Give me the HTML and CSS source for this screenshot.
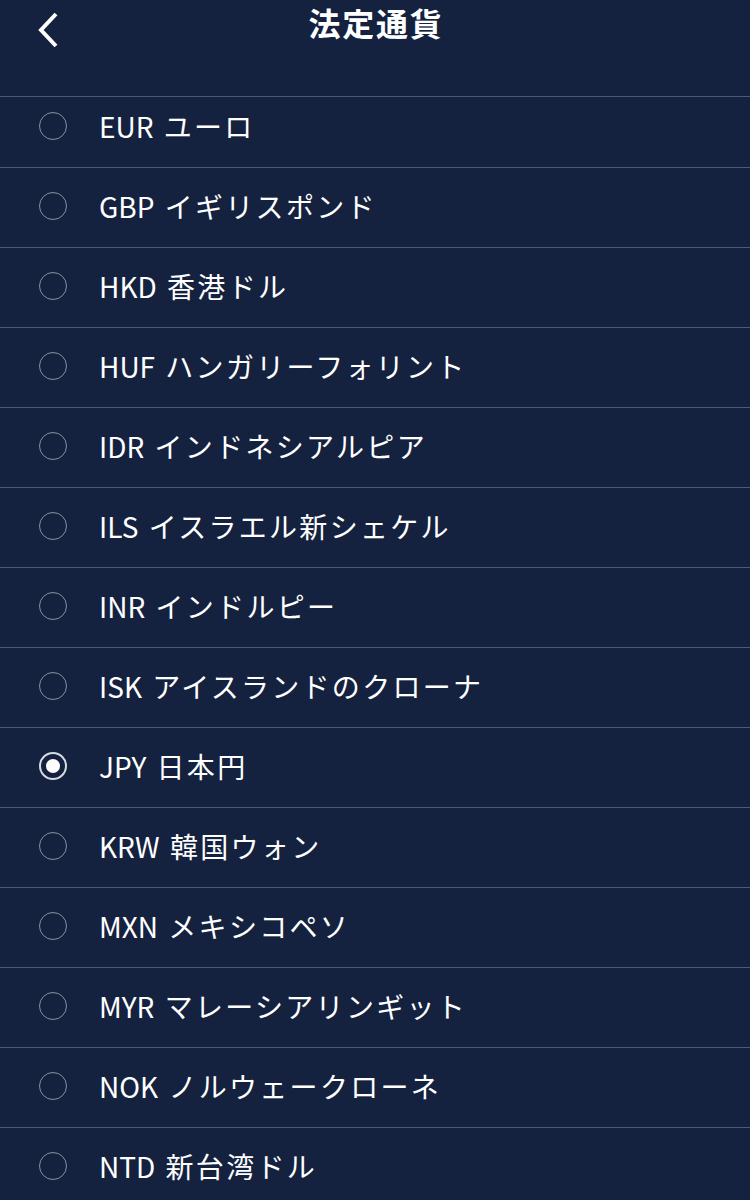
FILE: index.html
```html
<!DOCTYPE html>
<html lang="ja">
<head>
<meta charset="utf-8">
<link rel="stylesheet" href="styles.css">
</head>
<body>
<div class="screen">
  <header class="header">
    <div class="back">
      <svg width="24" height="36" viewBox="0 0 24 36"><path d="M20 2 L5 18 L20 34" fill="none" stroke="#fff" stroke-width="4" stroke-linecap="butt" stroke-linejoin="miter"/></svg>
    </div>
    <h1 class="title">法定通貨</h1>
  </header>
  <div class="viewport">
    <ul class="list">
      <li class="row"><span class="radio"></span><span class="label"><span class="code">EUR</span> <span class="name">ユーロ</span></span></li>
      <li class="row"><span class="radio"></span><span class="label"><span class="code">GBP</span> <span class="name">イギリスポンド</span></span></li>
      <li class="row"><span class="radio"></span><span class="label"><span class="code">HKD</span> <span class="name">香港ドル</span></span></li>
      <li class="row"><span class="radio"></span><span class="label"><span class="code">HUF</span> <span class="name">ハンガリーフォリント</span></span></li>
      <li class="row"><span class="radio"></span><span class="label"><span class="code">IDR</span> <span class="name">インドネシアルピア</span></span></li>
      <li class="row"><span class="radio"></span><span class="label"><span class="code">ILS</span> <span class="name">イスラエル新シェケル</span></span></li>
      <li class="row"><span class="radio"></span><span class="label"><span class="code">INR</span> <span class="name">インドルピー</span></span></li>
      <li class="row"><span class="radio"></span><span class="label"><span class="code">ISK</span> <span class="name">アイスランドのクローナ</span></span></li>
      <li class="row"><span class="radio checked"></span><span class="label"><span class="code">JPY</span> <span class="name">日本円</span></span></li>
      <li class="row"><span class="radio"></span><span class="label"><span class="code">KRW</span> <span class="name">韓国ウォン</span></span></li>
      <li class="row"><span class="radio"></span><span class="label"><span class="code">MXN</span> <span class="name">メキシコペソ</span></span></li>
      <li class="row"><span class="radio"></span><span class="label"><span class="code">MYR</span> <span class="name">マレーシアリンギット</span></span></li>
      <li class="row"><span class="radio"></span><span class="label"><span class="code">NOK</span> <span class="name">ノルウェークローネ</span></span></li>
      <li class="row"><span class="radio"></span><span class="label"><span class="code">NTD</span> <span class="name">新台湾ドル</span></span></li>
    </ul>
  </div>
</div>
</body>
</html>
```
FILE: styles.css
```css
* { box-sizing: border-box; }
html, body {
  margin: 0;
  padding: 0;
  background: #14223f;
}
body {
  font-family: "Noto Sans CJK JP", "Noto Sans", sans-serif;
  color: #fff;
}
.screen {
  width: 750px;
  height: 1200px;
  overflow: hidden;
  background: #14223f;
  display: flex;
  flex-direction: column;
}
.header {
  position: relative;
  height: 97px;
  flex: none;
  border-bottom: 1.5px solid #4e5872;
  display: flex;
  justify-content: center;
}
.back {
  position: absolute;
  left: 36px;
  top: 12px;
  width: 24px;
  height: 36px;
}
.back svg { display: block; }
.title {
  margin: 0;
  font-size: 32px;
  font-weight: 700;
  line-height: 44px;
  letter-spacing: 1.8px;
  padding-left: 2px;
}
.viewport {
  flex: 1;
  overflow: hidden;
}
.list {
  list-style: none;
  margin: -9px 0 0;
  padding: 0;
}
.row {
  height: 80px;
  border-bottom: 1.5px solid #4e5872;
  display: flex;
  align-items: center;
  padding-left: 39px;
  padding-bottom: 3px;
}
.radio {
  width: 28px;
  height: 28px;
  border-radius: 50%;
  border: 1.5px solid #8a909e;
  flex: none;
  display: flex;
  align-items: center;
  justify-content: center;
}
.radio.checked {
  border: 2px solid #d8dbe2;
}
.radio.checked::after {
  content: "";
  width: 14px;
  height: 14px;
  border-radius: 50%;
  background: #fff;
}
.label {
  margin-left: 32px;
  font-size: 28px;
  line-height: 40px;
  white-space: nowrap;
}
.code {
  letter-spacing: 0;
}
.name {
  margin-left: 4px;
  letter-spacing: 2.3px;
}
```
